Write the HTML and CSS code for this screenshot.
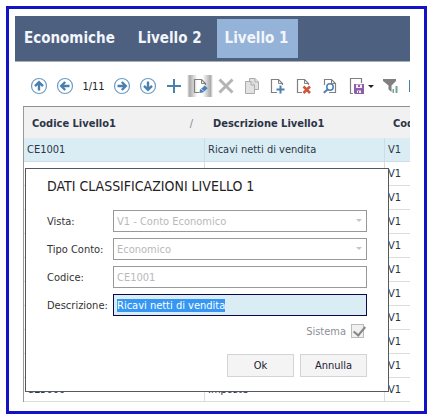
FILE: index.html
```html
<!DOCTYPE html>
<html lang="it">
<head>
  <meta charset="UTF-8">
  <title>Livello 1</title>
  <link rel="stylesheet" href="styles.css">
</head>
<body>
  <div class="frame">
    <nav class="tabs">
      <a class="tab" href="#economiche">Economiche</a>
      <a class="tab" href="#livello2">Livello 2</a>
      <a class="tab active" href="#livello1">Livello 1</a>
    </nav>

    <div class="toolbar">
      <button class="tool" title="Primo">
        <svg viewBox="0 0 18 18"><circle class="ring" cx="9" cy="9" r="7.5"/><path class="arrow" d="M9 13.5V6M5 9.2L9 5.2L13 9.2"/></svg>
      </button>
      <button class="tool" title="Precedente">
        <svg viewBox="0 0 18 18"><circle class="ring" cx="9" cy="9" r="7.5"/><path class="arrow" d="M13.5 9H6M9.2 5L5.2 9L9.2 13"/></svg>
      </button>
      <span class="counter">1/11</span>
      <button class="tool" title="Successivo">
        <svg viewBox="0 0 18 18"><circle class="ring" cx="9" cy="9" r="7.5"/><path class="arrow" d="M4.5 9H12M8.8 5L12.8 9L8.8 13"/></svg>
      </button>
      <button class="tool" title="Ultimo">
        <svg viewBox="0 0 18 18"><circle class="ring" cx="9" cy="9" r="7.5"/><path class="arrow" d="M9 4.5V12M5 8.8L9 12.8L13 8.8"/></svg>
      </button>
      <button class="tool" title="Nuovo">
        <svg viewBox="0 0 18 18"><path class="plus" d="M9 2V16M2 9H16"/></svg>
      </button>
      <button class="tool pressed" title="Modifica">
        <svg viewBox="0 0 18 18"><path class="sheet" d="M8 15.5H3.5V2.5H10.5L14.5 6.5V8"/><path class="fold" d="M10.5 2.5V6.5H14.5"/><path class="pencil" d="M8.3 16L9 12.8L13.8 8.5L16.7 11.2L12 15.4Z"/><path class="nib" d="M10.3 12L12.9 14.6"/></svg>
      </button>
      <button class="tool" title="Annulla modifica">
        <svg viewBox="0 0 18 18"><path class="cross" d="M2.5 2.5L15.5 15.5M15.5 2.5L2.5 15.5"/></svg>
      </button>
      <button class="tool" title="Copia">
        <svg viewBox="0 0 18 18"><path class="copy" d="M6.5 1.5H12L15.5 5V12.5H6.5Z"/><path class="copy" d="M2.5 4.5H8L11.5 8V16.5H2.5Z"/><path class="copy" d="M8 4.5V8H11.5M12 1.5V5H15.5"/></svg>
      </button>
      <button class="tool" title="Aggiungi">
        <svg viewBox="0 0 18 18"><path class="sheet" d="M8 15.5H2.5V2.5H9.5L13.5 6.5V8"/><path class="fold" d="M9.5 2.5V6.5H13.5"/><path class="add" d="M11.5 8.5V16.5M7.5 12.5H15.5"/></svg>
      </button>
      <button class="tool" title="Elimina">
        <svg viewBox="0 0 18 18"><path class="sheet" d="M7 15.5H2.5V2.5H9.5L13.5 6.5V8"/><path class="fold" d="M9.5 2.5V6.5H13.5"/><path class="delete" d="M8.5 9.5L15 16M15 9.5L8.5 16"/></svg>
      </button>
      <button class="tool" title="Cerca">
        <svg viewBox="0 0 18 18"><path class="sheet" d="M3.5 8V2.5H10.5L14.5 6.5V15.5H8"/><path class="fold" d="M10.5 2.5V6.5H14.5"/><circle class="lens" cx="9" cy="10" r="3.2"/><path class="handle" d="M6.6 12.4L2.8 15.8"/></svg>
      </button>
      <button class="tool menu" title="Salva">
        <svg viewBox="0 0 18 18"><path class="sheet" d="M5 16.5H2.5V1.5H13.5V6"/><path class="disk" d="M6 7H16V17H7L6 16Z"/><path class="label" d="M8 7.5H14V11H8ZM9 13.5H13V16H9Z"/><path class="disk" d="M10 8H12V10H10ZM10 14H11V16H10Z"/></svg>
        <span class="caret"></span>
      </button>
      <button class="tool" title="Filtro">
        <svg viewBox="0 0 18 18"><path class="funnel" d="M1 2H14V4L9.5 8.5V15L6.5 12.5V8.5L1 4Z"/><path class="bars" d="M10.5 12H12V16H10.5ZM13.5 9H15.5V16H13.5Z"/></svg>
      </button>
      <button class="tool" title="Esporta">
        <svg viewBox="0 0 18 18"><path class="edge" d="M1.5 3V15"/></svg>
      </button>
    </div>

    <div class="grid">
      <table>
        <colgroup>
          <col class="col-code">
          <col class="col-desc">
          <col>
        </colgroup>
        <thead>
          <tr>
            <th><div class="head">Codice Livello1 <span class="sort">∕</span></div></th>
            <th>Descrizione Livello1</th>
            <th>Cod</th>
          </tr>
        </thead>
        <tbody>
          <tr class="current"><td>CE1001</td><td>Ricavi netti di vendita</td><td>V1</td></tr>
          <tr><td></td><td></td><td>V1</td></tr>
          <tr><td></td><td></td><td>V1</td></tr>
          <tr><td></td><td></td><td>V1</td></tr>
          <tr><td></td><td></td><td>V1</td></tr>
          <tr><td></td><td></td><td>V1</td></tr>
          <tr><td></td><td></td><td>V1</td></tr>
          <tr><td></td><td></td><td>V1</td></tr>
          <tr><td></td><td></td><td>V1</td></tr>
          <tr><td></td><td></td><td>V1</td></tr>
          <tr><td>CE5000</td><td>Imposte</td><td>V1</td></tr>
        </tbody>
      </table>

      <form class="dialog">
        <h2>DATI CLASSIFICAZIONI LIVELLO 1</h2>
        <div class="fields">
          <label for="vista">Vista:</label>
          <div class="drop">
            <select id="vista" disabled><option>V1 - Conto Economico</option></select>
          </div>
          <label for="tipo">Tipo Conto:</label>
          <div class="drop">
            <select id="tipo" disabled><option>Economico</option></select>
          </div>
          <label for="codice">Codice:</label>
          <input type="text" id="codice" value="CE1001" disabled>
          <label for="descrizione">Descrizione:</label>
          <input type="text" id="descrizione" value="Ricavi netti di vendita" autocomplete="off" spellcheck="false">
        </div>
        <div class="system">
          <label for="sistema">Sistema</label>
          <input type="checkbox" id="sistema" checked disabled>
        </div>
        <div class="actions">
          <button type="button">Ok</button>
          <button type="button">Annulla</button>
        </div>
      </form>
    </div>
  </div>

  <script>
    const descrizione = document.getElementById("descrizione");
    descrizione.focus();
    descrizione.select();
  </script>
</body>
</html>
```
FILE: styles.css
```css
* {
  box-sizing: border-box;
}
body {
  margin: 0;
  padding: 6px 7px 6px 6px;
  background: #fff;
  color: #2b3547;
  font-family: "DejaVu Sans Condensed", "DejaVu Sans", sans-serif;
  font-size: 11px;
}
button, input, select {
  font: inherit;
  margin: 0;
}
.frame {
  border: 3px solid #1212c6;
  padding: 7px 14px 9px 6px;
}

/* tabs */
.tabs {
  display: flex;
  gap: 5px;
  padding: 3px 1px;
  background: #4e6080;
  border-bottom: 1px solid #a9adb8;
}
.tab {
  padding: 0 10px 0 8px;
  line-height: 39px;
  font-size: 15px;
  font-weight: bold;
  color: #f2f6fb;
  text-decoration: none;
  white-space: nowrap;
}
.tab.active {
  background: #95b3d9;
}

/* toolbar */
.toolbar {
  display: flex;
  align-items: center;
  height: 44px;
  padding: 4px 0 0 11px;
  overflow: hidden;
}
.tool {
  flex: none;
  display: flex;
  align-items: center;
  justify-content: center;
  width: 26px;
  height: 22px;
  padding: 0;
  border: none;
  background: none;
}
.tool.menu {
  width: 35px;
}
.tool.pressed {
  background: linear-gradient(to right, #fff, #aaa 10%, #fff 40%, #fff 60%, #aaa 90%, #fff);
}
.tool svg {
  width: 18px;
  height: 18px;
  fill: none;
}
.counter {
  flex: none;
  width: 31px;
  text-align: center;
  color: #222;
}
.caret {
  margin-left: 2px;
  border: 3px solid transparent;
  border-top-color: #222;
  border-bottom: none;
}
.ring { stroke: #6f9cc4; stroke-width: 1.2; }
.arrow { stroke: #4a80b0; stroke-width: 2.4; }
.plus { stroke: #4a80b0; stroke-width: 2; }
.sheet { stroke: #808080; stroke-width: 1.2; }
.fold { stroke: #808080; }
.pencil { fill: #4680bd; }
.nib { stroke: #d5e4f2; }
.cross { stroke: #b4b4b4; stroke-width: 3; }
.copy { stroke: #ababab; fill: #e2e2e2; }
.add { stroke: #4a80b0; stroke-width: 2; }
.delete { stroke: #d0573a; stroke-width: 2.6; }
.lens { stroke: #4a80b8; stroke-width: 1.5; fill: #fff; }
.handle { stroke: #4a80b8; stroke-width: 2; }
.disk { fill: #8e5fa8; }
.label { fill: #f3ecf7; }
.funnel { fill: #808080; }
.bars { fill: #6fa790; }
.edge { stroke: #4a80a8; }

/* grid */
.grid {
  position: relative;
  margin-left: 8px;
  border-top: 1px solid #8f8f8f;
  border-left: 1px solid #9a9a9a;
}
table {
  width: 100%;
  table-layout: fixed;
  border-collapse: separate;
  border-spacing: 0;
}
.col-code {
  width: 181px;
}
.col-desc {
  width: 180px;
}
th {
  height: 31px;
  padding: 2px 0 0 8px;
  background: #f1f1f1;
  text-align: left;
  white-space: nowrap;
  overflow: hidden;
}
.head {
  display: flex;
  justify-content: space-between;
  padding-right: 12px;
}
.sort {
  color: #888;
  font-weight: normal;
}
td {
  height: 24px;
  padding: 0 0 1px 3px;
  border-bottom: 1px solid #dcdcdc;
  border-right: 1px solid #dcdcdc;
  white-space: nowrap;
}
td:last-child {
  border-right: none;
}
.current td {
  background: #dbedf4;
  border-color: #cddde6;
}

/* dialog */
.dialog {
  position: absolute;
  top: 61px;
  left: 1px;
  right: 21px;
  padding: 9px 21px 14px;
  border: 1px solid #55585c;
  background: #fff;
}
h2 {
  margin: 0 0 15px;
  font-size: 14px;
  font-weight: normal;
  line-height: 17px;
  color: #222;
}
.fields {
  display: grid;
  grid-template-columns: 60px 1fr;
  gap: 6px;
  align-items: center;
  color: #333;
}
.fields label {
  white-space: nowrap;
}
.fields input, .fields select {
  display: block;
  width: 100%;
  height: 22px;
  padding: 0 3px;
  border: 1px solid #999;
  border-radius: 0;
  outline: none;
  background: #fff;
  color: #333;
}
.fields select {
  appearance: none;
}
.fields select:disabled, .fields input:disabled {
  color: #b9b9b9;
  opacity: 1;
}
.fields input:focus {
  border-color: #0a0a4a;
  background: #dbedf4;
}
.fields input::selection {
  background: #3596f3;
  color: #fff;
}
.drop {
  position: relative;
}
.drop::after {
  content: "";
  position: absolute;
  top: 9px;
  right: 5px;
  border: 3px solid transparent;
  border-top-color: #c6c6c6;
  border-bottom: none;
}
.system {
  display: flex;
  justify-content: flex-end;
  align-items: center;
  gap: 5px;
  margin-top: 8px;
  padding-right: 3px;
  color: #8d9096;
}
.system input {
  appearance: none;
  width: 13px;
  height: 14px;
  border: 1px solid #bbb;
  background: #f0f0f0;
}
.system input::before {
  content: "";
  display: block;
  width: 5px;
  height: 10px;
  margin: -1px 0 0 4px;
  border: solid #858585;
  border-width: 0 2px 2px 0;
  transform: rotate(40deg);
}
.actions {
  display: flex;
  justify-content: flex-end;
  gap: 6px;
  margin-top: 16px;
}
.actions button {
  width: 67px;
  height: 23px;
  padding: 0;
  border: 1px solid #d4d4d4;
  background: #f4f4f4;
  color: #1d2230;
}
```
